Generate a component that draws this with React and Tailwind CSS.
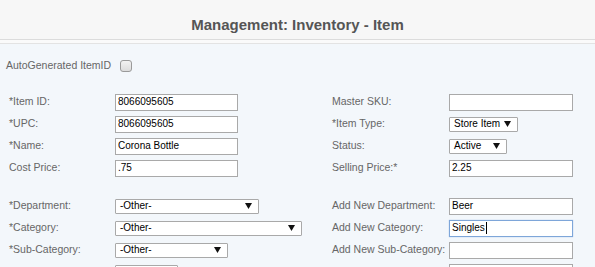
import React from 'react';

const font = { fontFamily: '"Liberation Sans", Arial, sans-serif' };

const Label = ({ children, className = '' }) => (
  <div className={`text-[10.5px] text-[#666] whitespace-nowrap ${className}`}>{children}</div>
);

const TextBox = ({ value = '', w = 'w-[123px]', focused = false }) => (
  <div
    className={`${w} h-[17px] bg-white flex items-center pl-[2px] text-[10px] text-black leading-none border ${
      focused ? 'border-[#7ea6d9] shadow-[0_0_1px_#9cbfe9]' : 'border-[#a9a9a9]'
    }`}
  >
    <span>{value}</span>
    {focused && <span className="w-px h-[12px] bg-black ml-px" />}
  </div>
);

const Select = ({ value, w }) => (
  <div className={`${w} h-[15px] bg-white border border-[#a9a9a9] rounded-[1px] flex items-center justify-between pl-[4px] pr-[6px] text-[10px] text-black leading-none`}>
    <span>{value}</span>
    <svg width="7" height="6" viewBox="0 0 7 6" className="shrink-0">
      <path d="M0 0h7L3.5 6z" fill="#111" />
    </svg>
  </div>
);

const Row = ({ left, leftCtl, right, rightCtl }) => (
  <div className="flex h-[22px] items-center">
    <Label className="w-[115px] pl-[9px]">{left}</Label>
    <div className="w-[217px]">{leftCtl}</div>
    <Label className="w-[117px]">{right}</Label>
    <div>{rightCtl}</div>
  </div>
);

export default function App() {
  return (
    <div className="w-[595px] h-[267px] overflow-hidden bg-[#f3f7fb]" style={font}>
      <div className="h-[40px] bg-[#f7f7f7] border-b border-[#dcdcdc] text-center pt-[16px]">
        <h1 className="text-[15px] leading-[17px] font-bold text-[#555]">Management: Inventory - Item</h1>
      </div>
      <div className="h-[4px] bg-[#fafafa] border-b border-[#e3e3e3]" />

      <div className="flex items-center h-[33px] pt-[11px] pl-[6px]">
        <Label>AutoGenerated ItemID</Label>
        <div className="ml-[9px] w-[12px] h-[12px] rounded-[3px] border border-[#9a9a9a] bg-gradient-to-b from-[#f2f2f2] to-[#dcdcdc]" />
      </div>

      <div className="pt-[14px]">
        <Row left="*Item ID:" leftCtl={<TextBox value="8066095605" />} right="Master SKU:" rightCtl={<TextBox w="w-[124px]" />} />
        <Row left="*UPC:" leftCtl={<TextBox value="8066095605" />} right="*Item Type:" rightCtl={<Select value="Store Item" w="w-[69px]" />} />
        <Row left="*Name:" leftCtl={<TextBox value="Corona Bottle" />} right="Status:" rightCtl={<Select value="Active" w="w-[58px]" />} />
        <Row left="Cost Price:" leftCtl={<TextBox value=".75" />} right="Selling Price:*" rightCtl={<TextBox value="2.25" w="w-[124px]" />} />
      </div>

      <div className="pt-[16px]">
        <Row left="*Department:" leftCtl={<Select value="-Other-" w="w-[144px]" />} right="Add New Department:" rightCtl={<TextBox value="Beer" w="w-[124px]" />} />
        <Row left="*Category:" leftCtl={<Select value="-Other-" w="w-[187px]" />} right="Add New Category:" rightCtl={<TextBox value="Singles" w="w-[124px]" focused />} />
        <Row left="*Sub-Category:" leftCtl={<Select value="-Other-" w="w-[113px]" />} right="Add New Sub-Category:" rightCtl={<TextBox w="w-[124px]" />} />
        <Row left="" leftCtl={<Select value="" w="w-[63px]" />} right="" rightCtl={<TextBox w="w-[124px]" />} />
      </div>
    </div>
  );
}
